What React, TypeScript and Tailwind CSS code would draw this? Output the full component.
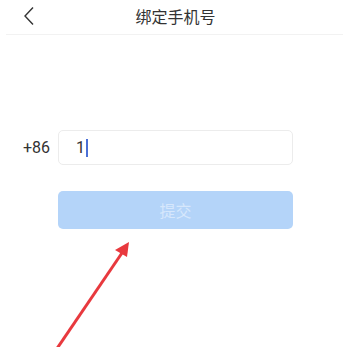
export default function App() {
  return (
    <div
      className="relative w-[343px] h-[347px] overflow-hidden bg-white"
      style={{ fontFamily: '"Noto Sans CJK SC", "Noto Sans", sans-serif' }}
    >
      <div className="relative h-[34px] flex items-center justify-center pl-[8px]">
        <button className="absolute left-[23px] top-[6px] text-[#333]">
          <svg width="12" height="20" viewBox="0 0 12 20" fill="none" stroke="currentColor" strokeWidth="1.4">
            <path d="M10 1.5L2 10l8 8.5" />
          </svg>
        </button>
        <h1 className="text-[16px] text-[#333] leading-none -mt-[3px]">绑定手机号</h1>
      </div>
      <div className="ml-[6px] h-px bg-[#f2f2f2]" />

      <div className="pt-[95px] flex items-center">
        <span className="w-[58px] pl-[23px] text-[16px] text-[#333]" style={{ fontFamily: 'Roboto, sans-serif' }}>
          +86
        </span>
        <div className="w-[235px] h-[35px] rounded-[5px] border border-[#ececec] flex items-center pl-[17px]">
          <span className="text-[16px] text-[#333]" style={{ fontFamily: 'Roboto, sans-serif' }}>1</span>
          <span className="ml-px w-[2px] h-[18px] bg-[#4a6fd6]" />
        </div>
      </div>

      <div className="pt-[26px] pl-[58px]">
        <div className="w-[235px] h-[38px] rounded-[5px] bg-[#b4d4f9] flex items-center justify-center text-[16px] text-[#d6e7fc]">
          提交
        </div>
      </div>

      <svg className="absolute left-0 top-0" width="343" height="347" viewBox="0 0 343 347">
        <line x1="56" y1="350" x2="124" y2="250" stroke="#e8393e" strokeWidth="3" />
        <polygon points="129,242 115,250 127,257" fill="#e8393e" />
      </svg>
    </div>
  );
}
